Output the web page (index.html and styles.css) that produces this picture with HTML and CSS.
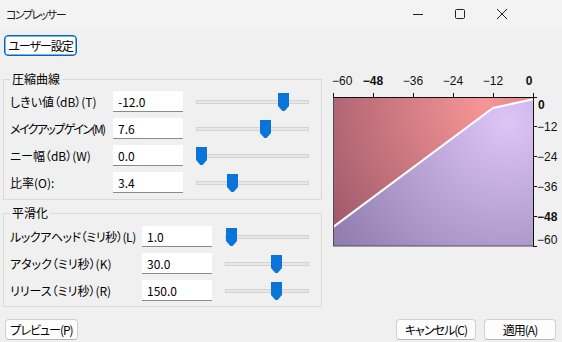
FILE: index.html
```html
<!DOCTYPE html>
<html lang="ja">
<head>
<meta charset="utf-8">
<title>コンプレッサー</title>
<link rel="stylesheet" href="styles.css">
</head>
<body>
<div class="window">
  <div class="titlebar">
    <span class="title">コンプレッサー</span>
    <div class="controls">
      <svg class="ctl" width="42" height="28" viewBox="0 0 42 28"><line x1="14" y1="14.5" x2="24" y2="14.5" stroke="#222" stroke-width="1"/></svg>
      <svg class="ctl" width="42" height="28" viewBox="0 0 42 28"><rect x="14.5" y="9.5" width="9" height="9" rx="1" fill="none" stroke="#222" stroke-width="1"/></svg>
      <svg class="ctl" width="42" height="28" viewBox="0 0 42 28"><path d="M14 9 L24 19 M24 9 L14 19" stroke="#222" stroke-width="1"/></svg>
    </div>
  </div>

  <div class="toolbar">
    <button class="btn btn-focus btn-user">ユーザー設定</button>
  </div>

  <div class="main">
    <div class="groups">
      <fieldset class="group g1">
        <legend>圧縮曲線</legend>
        <div class="row">
          <span class="label">しきい値（dB）(T)</span>
          <div class="field">-12.0</div>
          <div class="slider"><div class="track"></div><div class="thumb" style="left:82px"></div></div>
        </div>
        <div class="row">
          <span class="label tight">メイクアップゲイン(M)</span>
          <div class="field">7.6</div>
          <div class="slider"><div class="track"></div><div class="thumb" style="left:64px"></div></div>
        </div>
        <div class="row">
          <span class="label">ニー幅（dB）(W)</span>
          <div class="field">0.0</div>
          <div class="slider"><div class="track"></div><div class="thumb" style="left:0px"></div></div>
        </div>
        <div class="row">
          <span class="label">比率(O):</span>
          <div class="field">3.4</div>
          <div class="slider"><div class="track"></div><div class="thumb" style="left:31px"></div></div>
        </div>
      </fieldset>

      <fieldset class="group g2">
        <legend>平滑化</legend>
        <div class="row">
          <span class="label semi">ルックアヘッド（ミリ秒）(L)</span>
          <div class="field">1.0</div>
          <div class="slider"><div class="track"></div><div class="thumb" style="left:1px"></div></div>
        </div>
        <div class="row">
          <span class="label">アタック（ミリ秒）(K)</span>
          <div class="field">30.0</div>
          <div class="slider"><div class="track"></div><div class="thumb" style="left:46px"></div></div>
        </div>
        <div class="row">
          <span class="label">リリース（ミリ秒）(R)</span>
          <div class="field">150.0</div>
          <div class="slider"><div class="track"></div><div class="thumb" style="left:46px"></div></div>
        </div>
      </fieldset>
    </div>

    <svg class="graph" width="237" height="180" viewBox="0 0 237 180">
      <defs>
        <radialGradient id="gRed" gradientUnits="userSpaceOnUse" cx="160" cy="34" r="190">
          <stop offset="0" stop-color="#f69696"/>
          <stop offset="1" stop-color="#a05a6b"/>
        </radialGradient>
        <radialGradient id="gPur" gradientUnits="userSpaceOnUse" cx="182" cy="52" r="215">
          <stop offset="0" stop-color="#ddc5f6"/>
          <stop offset="1" stop-color="#8c7aab"/>
        </radialGradient>
      </defs>
      <polygon points="8,26 208,26 208,28.2 168,36.9 8,156.1" fill="url(#gRed)"/>
      <polygon points="8,156.1 168,36.9 208,28.2 208,175 8,175" fill="url(#gPur)"/>
      <polyline points="8,156.1 168,36.9 208,28.2" fill="none" stroke="#fff" stroke-width="2"/>
      <rect x="8.5" y="26.5" width="200" height="148.5" fill="none" stroke="#505050" stroke-width="1"/>
      <g stroke="#111" stroke-width="1">
        <line x1="8" y1="26.5" x2="212" y2="26.5"/>
        <line x1="208.5" y1="22" x2="208.5" y2="175.5"/>
        <line x1="8.5" y1="22" x2="8.5" y2="26"/>
        <line x1="48.5" y1="22" x2="48.5" y2="26"/>
        <line x1="88.5" y1="22" x2="88.5" y2="26"/>
        <line x1="128.5" y1="22" x2="128.5" y2="26"/>
        <line x1="168.5" y1="22" x2="168.5" y2="26"/>
        <line x1="208" y1="55.5" x2="212" y2="55.5"/>
        <line x1="208" y1="85.5" x2="212" y2="85.5"/>
        <line x1="208" y1="115.5" x2="212" y2="115.5"/>
        <line x1="208" y1="145.5" x2="212" y2="145.5"/>
        <line x1="208" y1="175.5" x2="212" y2="175.5"/>
      </g>
      <g class="axis">
        <text x="7" y="14">−60</text>
        <text x="48" y="14" text-anchor="middle" class="bold">−48</text>
        <text x="88" y="14" text-anchor="middle">−36</text>
        <text x="128" y="14" text-anchor="middle">−24</text>
        <text x="168" y="14" text-anchor="middle">−12</text>
        <text x="204" y="14" text-anchor="middle" class="bold">0</text>
        <text x="213" y="37.5" class="bold">0</text>
        <text x="212" y="60">−12</text>
        <text x="212" y="90">−24</text>
        <text x="212" y="120">−36</text>
        <text x="212" y="150" class="bold">−48</text>
        <text x="212" y="173">−60</text>
      </g>
    </svg>
  </div>

  <div class="footer">
    <button class="btn btn-preview">プレビュー(P)</button>
    <div class="spacer"></div>
    <button class="btn btn-cancel">キャンセル(C)</button>
    <button class="btn btn-apply">適用(A)</button>
  </div>
</div>
</body>
</html>
```

FILE: styles.css
```css
html, body {
  margin: 0;
  padding: 0;
}
body {
  background: #f0f0f0;
  font-family: "Noto Sans CJK JP", "Noto Sans", sans-serif;
  font-size: 12px;
  color: #000;
  font-feature-settings: "palt";
  width: 562px;
  height: 342px;
  overflow: hidden;
}
.window {
  display: flex;
  flex-direction: column;
}
.titlebar {
  height: 28px;
  background: #f3f3f3;
  display: flex;
  align-items: center;
  justify-content: space-between;
}
.title {
  padding-left: 6px;
  font-size: 11px;
  letter-spacing: -1.5px;
  color: #1a1a1a;
}
.controls {
  display: flex;
  padding-right: 37px;
}
.ctl {
  display: block;
}
.toolbar {
  padding: 7px 0 0 4px;
  display: flex;
}
.btn {
  font: inherit;
  font-feature-settings: "palt";
  letter-spacing: -1px;
  height: 21px;
  line-height: 19px;
  padding: 0;
  background: #fdfdfd;
  border: 1px solid #d0d0d0;
  border-bottom-color: #b8b8b8;
  border-radius: 4px;
  color: #000;
  text-align: center;
}
.btn-focus {
  border: 1px solid #0067c0;
  box-shadow: inset 0 0 0 0.5px #0067c0;
}
.btn-user { width: 73px; }
.btn-preview { width: 73px; }
.btn-cancel { width: 80px; }
.btn-apply { width: 72px; }

.main {
  display: flex;
  align-items: flex-start;
  padding: 15px 0 0 3px;
}
.groups {
  width: 319px;
  display: flex;
  flex-direction: column;
  gap: 5px;
}
.group {
  margin: 0;
  border: 1px solid #dadada;
  display: grid;
  row-gap: 6px;
  min-width: 0;
}
.group legend {
  padding: 0 2px;
  line-height: 16px;
  height: 16px;
}
.g1 {
  padding: 4px 12px 6px 6px;
  grid-template-columns: 103px 70px 1fr;
}
.g2 {
  padding: 5px 12px 5px 6px;
  grid-template-columns: 132px 70px 1fr;
}
.row {
  display: contents;
}
.label {
  align-self: center;
  white-space: nowrap;
  line-height: 21px;
}
.label.tight {
  letter-spacing: -1.6px;
}
.label.semi {
  letter-spacing: -0.4px;
}
.field {
  height: 21px;
  line-height: 21px;
  background: #fff;
  border-bottom: 1px solid #8a8a8a;
  padding-left: 5px;
  box-sizing: border-box;
}
.slider {
  position: relative;
  height: 21px;
  margin-left: 13px;
}
.track {
  position: absolute;
  left: 0;
  right: 0;
  top: 9px;
  height: 4px;
  box-sizing: border-box;
  background: #e7e7e7;
  border: 1px solid #d3d3d3;
}
.thumb {
  position: absolute;
  top: 2px;
  width: 11px;
  height: 18px;
  background: #0a74d8;
  clip-path: polygon(0 0, 100% 0, 100% 72%, 60% 100%, 40% 100%, 0 72%);
}
.graph {
  display: block;
  margin-left: 3px;
  flex: none;
}
.axis text {
  font-family: "Liberation Sans", sans-serif;
  font-size: 12px;
  fill: #111;
}
.axis text.bold {
  font-weight: bold;
}
.footer {
  display: flex;
  gap: 8px;
  padding: 12px 6px 0 5px;
}
.spacer {
  flex: 1;
}
```
